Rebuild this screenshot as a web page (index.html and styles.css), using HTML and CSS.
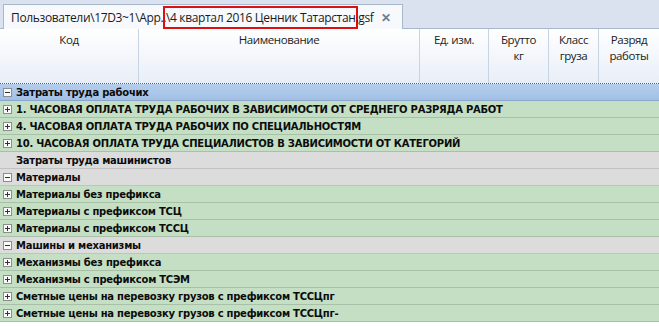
FILE: index.html
```html
<!DOCTYPE html>
<html lang="ru">
<head>
    <meta charset="UTF-8">
    <title>Ценник</title>
    <link rel="stylesheet" href="styles.css">
</head>
<body>
    <div class="tabbar">
        <div class="tab">
            <span>Пользователи\17D3~1\App..</span><span class="mark">\4 квартал 2016 Ценник Татарстан</span><span>.gsf</span>
            <span class="close">✕</span>
        </div>
    </div>

    <div class="head">
        <div class="hcell">Код</div>
        <div class="hcell">Наименование</div>
        <div class="hcell">Ед. изм.</div>
        <div class="hcell">Брутто<br>кг</div>
        <div class="hcell">Класс<br>груза</div>
        <div class="hcell">Разряд<br>работы</div>
    </div>

    <div class="rows">
        <div class="row sel"><i class="box minus"></i>Затраты труда рабочих</div>
        <div class="row green"><i class="box plus"></i>1. ЧАСОВАЯ ОПЛАТА ТРУДА РАБОЧИХ В ЗАВИСИМОСТИ ОТ СРЕДНЕГО РАЗРЯДА РАБОТ</div>
        <div class="row green"><i class="box plus"></i>4. ЧАСОВАЯ ОПЛАТА ТРУДА РАБОЧИХ ПО СПЕЦИАЛЬНОСТЯМ</div>
        <div class="row green"><i class="box plus"></i>10. ЧАСОВАЯ ОПЛАТА ТРУДА СПЕЦИАЛИСТОВ В ЗАВИСИМОСТИ ОТ КАТЕГОРИЙ</div>
        <div class="row gray"><i class="box none"></i>Затраты труда машинистов</div>
        <div class="row gray"><i class="box minus"></i>Материалы</div>
        <div class="row green"><i class="box plus"></i>Материалы без префикса</div>
        <div class="row green"><i class="box plus"></i>Материалы с префиксом ТСЦ</div>
        <div class="row green"><i class="box plus"></i>Материалы с префиксом ТССЦ</div>
        <div class="row gray"><i class="box minus"></i>Машины и механизмы</div>
        <div class="row green"><i class="box plus"></i>Механизмы без префикса</div>
        <div class="row green"><i class="box plus"></i>Механизмы с префиксом ТСЭМ</div>
        <div class="row green"><i class="box plus"></i>Сметные цены на перевозку грузов с префиксом ТССЦпг</div>
        <div class="row green"><i class="box plus"></i>Сметные цены на перевозку грузов с префиксом ТССЦпг-</div>
    </div>
</body>
</html>
```

FILE: styles.css
```css
* {
    margin: 0;
    padding: 0;
    box-sizing: border-box;
}

body {
    width: 659px;
    height: 326px;
    overflow: hidden;
    background: #fff;
    font-family: "Open Sans", "Noto Sans", sans-serif;
    color: #1b1b1b;
}

/* Вкладки */
.tabbar {
    height: 29px;
    background: #d9e2ee;
    border-bottom: 1px solid #a7b7cd;
    padding: 4px 0 0 3px;
}

.tab {
    position: relative;
    display: inline-flex;
    align-items: center;
    width: 400px;
    height: 25px;
    padding-left: 7px;
    background: #f7f9fc;
    border: 1px solid #a7b7cd;
    border-bottom: none;
    font-size: 12px;
    letter-spacing: -0.35px;
    white-space: nowrap;
}

.mark {
    outline: 2px solid #dc1010;
    outline-offset: 1px;
}

.close {
    position: absolute;
    right: 11px;
    top: 4px;
    font-size: 12px;
    font-weight: bold;
    color: #707c8c;
}

/* Заголовок таблицы */
.head {
    display: grid;
    grid-template-columns: 139px 281px 69px 60px 50px 60px;
    height: 55px;
    background: linear-gradient(#ffffff, #e8eef7);
    border-bottom: 1px dotted #5a6470;
}

.hcell {
    padding-top: 3px;
    text-align: center;
    font-size: 11.5px;
    line-height: 16px;
    letter-spacing: -0.4px;
    color: #222;
    border-right: 1px solid #c9d4e3;
}

.hcell:last-child {
    border-right: none;
}

/* Строки */
.row {
    display: flex;
    align-items: center;
    height: 17px;
    padding-left: 3px;
    font-family: "DejaVu Sans", sans-serif;
    font-size: 10px;
    font-weight: bold;
    letter-spacing: -0.25px;
    color: #0c0c0c;
    white-space: nowrap;
    border-bottom: 1px solid #a8bfa8;
}

.sel {
    background: linear-gradient(#b4cdec, #a2c0e6);
    border-bottom-color: #8aa6cc;
}

.green {
    background: #c4dfc4;
}

.gray {
    background: #dcdcdc;
    border-bottom-color: #c2c2c2;
}

.box {
    position: relative;
    width: 9px;
    height: 9px;
    margin-right: 4px;
    flex: none;
    border: 1px solid #8d8d8d;
    background: #fafafa;
}

.box.none {
    visibility: hidden;
}

.box::before,
.box.plus::after {
    content: "";
    position: absolute;
    background: #333;
}

.box::before {
    left: 1px;
    top: 3px;
    width: 5px;
    height: 1px;
}

.box.plus::after {
    left: 3px;
    top: 1px;
    width: 1px;
    height: 5px;
}
```
